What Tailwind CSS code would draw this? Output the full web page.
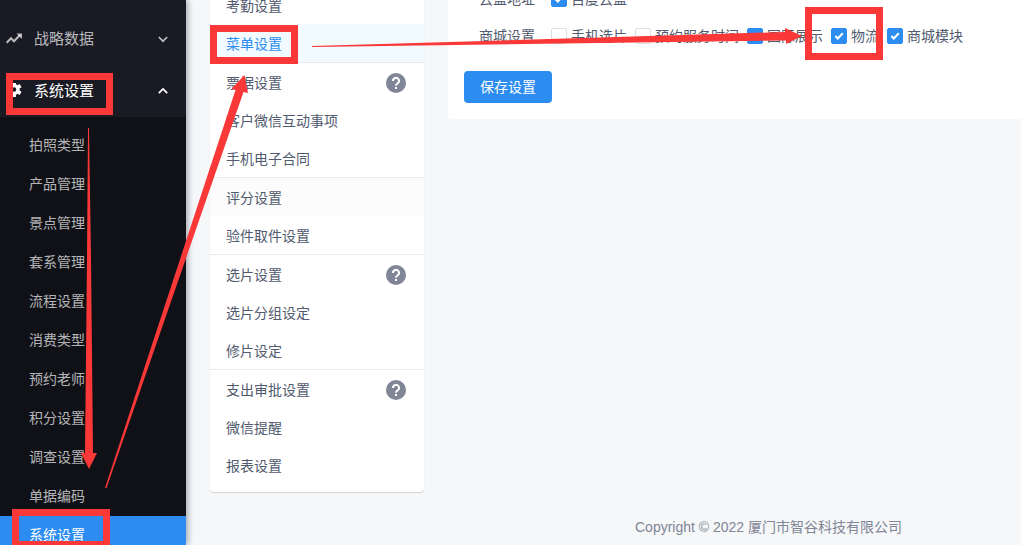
<!DOCTYPE html>
<html lang="zh-CN">
<head>
  <meta charset="UTF-8" />
  <meta name="viewport" content="width=device-width, initial-scale=1.0" />
  <title>系统设置 - 菜单设置</title>
  <script src="https://cdn.jsdelivr.net/npm/@tailwindcss/browser@4"></script>
</head>
<body class="relative flex h-screen overflow-hidden bg-[#f5f7f9] font-['Liberation_Sans','Noto_Sans_CJK_SC',sans-serif] text-sm text-[#515a6e]">

  <!-- 左侧导航 -->
  <aside class="flex w-[186px] shrink-0 flex-col overflow-hidden bg-[#191a23] pt-[13px] text-white/70 shadow-[2px_0_6px_rgba(0,21,41,0.35)]">
    <button type="button" class="flex h-[52px] w-full shrink-0 items-center pl-1.5 pr-[18px] text-[15px]">
      <svg class="h-4 w-4" viewBox="0 0 16 16" fill="none" stroke="currentColor" stroke-width="2">
        <path d="M0.7 11.800 5 7.300l3 3 6-6.300" />
        <path d="M10.500 2.500H16V8z" fill="currentColor" stroke="none" />
      </svg>
      <span class="ml-3">战略数据</span>
      <svg class="ml-auto h-2.5 w-2.5" viewBox="0 0 10 10" fill="none" stroke="currentColor" stroke-width="1.7"><path d="M.8 3 5 7.2 9.2 3" /></svg>
    </button>
    <button type="button" class="flex h-[52px] w-full shrink-0 items-center pl-1.5 pr-[18px] text-[15px] text-white">
      <svg class="h-4 w-4" viewBox="0 0 16 16" fill="none" stroke="currentColor">
        <circle cx="8" cy="6.500" r="4" stroke-width="3.400" />
        <path d="M8-1v3M8 11v3M1.400 2.700 4 4.200M12 8.800l2.600 1.500M1.400 10.300 4 8.800M12 4.200l2.600-1.500" stroke-width="3.800" />
      </svg>
      <span class="ml-3">系统设置</span>
      <svg class="ml-auto h-2.5 w-2.5" viewBox="0 0 10 10" fill="none" stroke="currentColor" stroke-width="1.7"><path d="M.8 7.2 5 3l4.2 4.2" /></svg>
    </button>
    <nav class="min-h-0 flex-1 overflow-hidden bg-[#101117] pt-[9px]">
      <a href="#" class="flex h-[39px] items-center pb-0.5 pl-[29px]">拍照类型</a>
      <a href="#" class="flex h-[39px] items-center pb-0.5 pl-[29px]">产品管理</a>
      <a href="#" class="flex h-[39px] items-center pb-0.5 pl-[29px]">景点管理</a>
      <a href="#" class="flex h-[39px] items-center pb-0.5 pl-[29px]">套系管理</a>
      <a href="#" class="flex h-[39px] items-center pb-0.5 pl-[29px]">流程设置</a>
      <a href="#" class="flex h-[39px] items-center pb-0.5 pl-[29px]">消费类型</a>
      <a href="#" class="flex h-[39px] items-center pb-0.5 pl-[29px]">预约老师</a>
      <a href="#" class="flex h-[39px] items-center pb-0.5 pl-[29px]">积分设置</a>
      <a href="#" class="flex h-[39px] items-center pb-0.5 pl-[29px]">调查设置</a>
      <a href="#" class="flex h-[39px] items-center pb-0.5 pl-[29px]">单据编码</a>
      <a href="#" class="flex h-[39px] items-center bg-[#2d8cf0] pb-0.5 pl-[29px] text-white">系统设置</a>
    </nav>
  </aside>

  <div class="flex min-w-0 flex-1 items-start gap-6 pl-6">

    <!-- 设置菜单 -->
    <nav class="-mt-[14px] w-[214px] shrink-0 rounded bg-white pb-2 shadow-[0_1px_1px_rgba(0,0,0,0.15)]">
      <div class="border-b border-[#e8eaec]">
        <a href="#" class="flex h-[38px] items-center px-4 pt-0.5">考勤设置</a>
        <a href="#" class="flex h-[38px] items-center bg-[#f0faff] px-4 pt-0.5 text-[#2d8cf0]">菜单设置</a>
      </div>
      <div class="border-b border-[#e8eaec]">
        <a href="#" class="flex h-[38px] items-center justify-between pl-4 pr-[18px] pt-0.5">票据设置
          <svg class="h-5 w-5" viewBox="0 0 20 20" fill="none"><circle cx="10" cy="10" r="10" fill="#808695" /><path d="M7 8a3 3 0 1 1 4.6 2.4C10.500 11.100 10 11.600 10 12.700" stroke="#fff" stroke-width="2" /><path d="M9 14h2v2H9z" fill="#fff" /></svg>
        </a>
        <a href="#" class="flex h-[38px] items-center px-4 pt-0.5">客户微信互动事项</a>
        <a href="#" class="flex h-[38px] items-center px-4 pt-0.5">手机电子合同</a>
      </div>
      <div class="border-b border-[#e8eaec]">
        <a href="#" class="flex h-[38px] items-center bg-[#fcfcfc] px-4 pt-0.5">评分设置</a>
        <a href="#" class="flex h-[38px] items-center px-4 pt-0.5">验件取件设置</a>
      </div>
      <div class="border-b border-[#e8eaec]">
        <a href="#" class="flex h-[38px] items-center justify-between pl-4 pr-[18px] pt-0.5">选片设置
          <svg class="h-5 w-5" viewBox="0 0 20 20" fill="none"><circle cx="10" cy="10" r="10" fill="#808695" /><path d="M7 8a3 3 0 1 1 4.6 2.4C10.500 11.100 10 11.600 10 12.700" stroke="#fff" stroke-width="2" /><path d="M9 14h2v2H9z" fill="#fff" /></svg>
        </a>
        <a href="#" class="flex h-[38px] items-center px-4 pt-0.5">选片分组设定</a>
        <a href="#" class="flex h-[38px] items-center px-4 pt-0.5">修片设定</a>
      </div>
      <div>
        <a href="#" class="flex h-[38px] items-center justify-between pl-4 pr-[18px] pt-0.5">支出审批设置
          <svg class="h-5 w-5" viewBox="0 0 20 20" fill="none"><circle cx="10" cy="10" r="10" fill="#808695" /><path d="M7 8a3 3 0 1 1 4.6 2.4C10.500 11.100 10 11.600 10 12.700" stroke="#fff" stroke-width="2" /><path d="M9 14h2v2H9z" fill="#fff" /></svg>
        </a>
        <a href="#" class="flex h-[38px] items-center px-4 pt-0.5">微信提醒</a>
        <a href="#" class="flex h-[38px] items-center px-4 pt-0.5">报表设置</a>
      </div>
    </nav>

    <main class="flex h-full min-w-0 flex-1 flex-col">
      <form class="-mt-5 rounded-l bg-white px-4 pb-4">
        <div role="group" aria-labelledby="cloud-label" class="flex h-[37px] items-center pl-[15px]">
          <span id="cloud-label" class="mr-4">云盘地址</span>
          <label class="flex items-center gap-1">
            <span class="grid h-4 w-4 *:[grid-area:1/1]">
              <input type="checkbox" checked class="h-4 w-4 appearance-none rounded-xs border border-[#dcdee2] bg-white checked:border-[#2d8cf0] checked:bg-[#2d8cf0]">
              <svg class="pointer-events-none h-4 w-4" viewBox="0 0 16 16" fill="none" stroke="#fff" stroke-width="2"><path d="m4.300 8 2.500 2.500 5-5.300" /></svg>
            </span>
            百度云盘
          </label>
        </div>
        <div role="group" aria-labelledby="mall-label" class="flex h-[37px] items-center pl-[15px]">
          <span id="mall-label" class="mr-4">商城设置</span>
          <div class="flex items-center gap-2 whitespace-nowrap">
            <label class="flex items-center gap-1">
              <input type="checkbox" class="h-4 w-4 appearance-none rounded-xs border border-[#dcdee2] bg-white checked:border-[#2d8cf0] checked:bg-[#2d8cf0]">
              手机选片
            </label>
            <label class="flex items-center gap-1">
              <input type="checkbox" class="h-4 w-4 appearance-none rounded-xs border border-[#dcdee2] bg-white checked:border-[#2d8cf0] checked:bg-[#2d8cf0]">
              预约服务时间
            </label>
            <label class="flex items-center gap-1">
              <span class="grid h-4 w-4 *:[grid-area:1/1]">
                <input type="checkbox" checked class="h-4 w-4 appearance-none rounded-xs border border-[#dcdee2] bg-white checked:border-[#2d8cf0] checked:bg-[#2d8cf0]">
                <svg class="pointer-events-none h-4 w-4" viewBox="0 0 16 16" fill="none" stroke="#fff" stroke-width="2"><path d="m4.300 8 2.500 2.500 5-5.300" /></svg>
              </span>
              国际展示
            </label>
            <label class="flex items-center gap-1">
              <span class="grid h-4 w-4 *:[grid-area:1/1]">
                <input type="checkbox" checked class="h-4 w-4 appearance-none rounded-xs border border-[#dcdee2] bg-white checked:border-[#2d8cf0] checked:bg-[#2d8cf0]">
                <svg class="pointer-events-none h-4 w-4" viewBox="0 0 16 16" fill="none" stroke="#fff" stroke-width="2"><path d="m4.300 8 2.500 2.500 5-5.300" /></svg>
              </span>
              物流
            </label>
            <label class="flex items-center gap-1">
              <span class="grid h-4 w-4 *:[grid-area:1/1]">
                <input type="checkbox" checked class="h-4 w-4 appearance-none rounded-xs border border-[#dcdee2] bg-white checked:border-[#2d8cf0] checked:bg-[#2d8cf0]">
                <svg class="pointer-events-none h-4 w-4" viewBox="0 0 16 16" fill="none" stroke="#fff" stroke-width="2"><path d="m4.300 8 2.500 2.500 5-5.300" /></svg>
              </span>
              商城模块
            </label>
          </div>
        </div>
        <button type="submit" class="mt-[17px] flex h-8 items-center rounded bg-[#2d8cf0] px-4 text-white">保存设置</button>
      </form>
      <footer class="mt-auto pb-2 pl-[187px] text-[#808695]">Copyright © 2022 厦门市智谷科技有限公司</footer>
    </main>
  </div>

  <!-- 操作步骤标注：红框和箭头 -->
  <svg class="pointer-events-none absolute left-0 top-0" width="1021" height="545" viewBox="0 0 1021 545">
    <g fill="none" stroke="#fb3838" stroke-width="7">
      <rect x="9.500" y="76.500" width="100" height="35" />
      <rect x="15.500" y="512.500" width="91" height="32" />
      <rect x="213.500" y="28.500" width="81" height="32" />
      <rect x="808.500" y="10.500" width="71" height="46" />
    </g>
    <g fill="#fb3838">
      <path d="M88 128h1l2 130 2 195h4l-8 16-8-16h4l2-195z" />
      <path d="M105 488 235.500 90l-4-1 13-14 3.500 18-4.500-1L106.500 488z" />
      <path d="M312 46 785 32v-4l17 8-16 8v-3.500L312 47z" />
    </g>
  </svg>
</body>
</html>
